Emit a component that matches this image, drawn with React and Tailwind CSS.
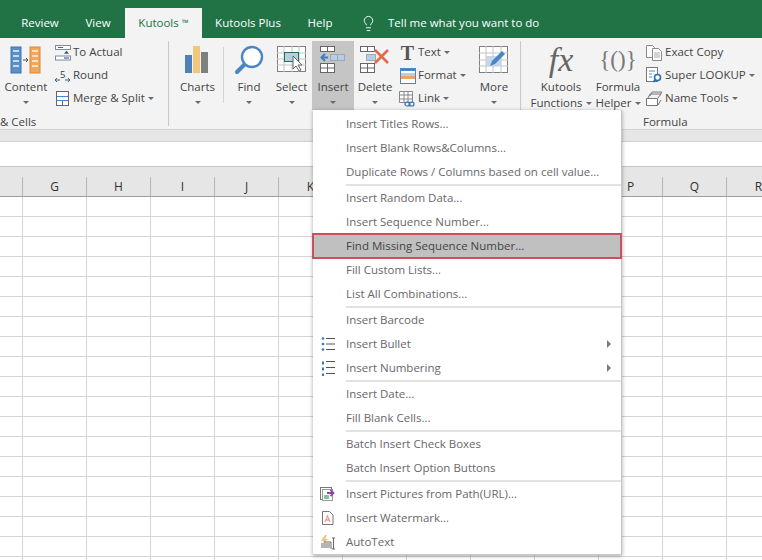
import { Lightbulb } from "lucide-react";

// L a O quedan tapadas por el menu, no llevan letra
const columns = ["", "G", "H", "I", "J", "K", "", "", "", "", "P", "Q", "R"];
const rows = Array.from({ length: 19 }, (_, i) => i);

//==================== Iconos del ribbon ====================//
const ContentIcon = () => (
  <svg width="32" height="28" viewBox="0 0 32 28">
    <rect x="1" y="1" width="10" height="26" fill="#5b8fc7" stroke="#3f74b0" />
    <rect x="20" y="1" width="10" height="26" fill="#f2a65a" stroke="#d98a3a" />
    {[4, 9, 14, 19].map((y) => (
      <g key={y} fill="#c6d9ee">
        <rect x="3" y={y} width="6" height="2" />
        <rect x="22" y={y} width="6" height="2" fill="#fde1c2" />
      </g>
    ))}
    <path d="M13 14h5M16 12l2 2-2 2" stroke="#555" fill="none" />
  </svg>
);

const ChartsIcon = () => (
  <svg width="26" height="27" viewBox="0 0 26 27">
    <rect x="0" y="9" width="7" height="18" fill="#4f81b8" />
    <rect x="8" y="0" width="7" height="27" fill="#f0c67a" />
    <rect x="16" y="6" width="7" height="21" fill="#7f7f7f" />
  </svg>
);

const FindIcon = () => (
  <svg width="30" height="30" viewBox="0 0 30 30">
    <circle cx="18" cy="12" r="10" fill="#fff" stroke="#4a86c5" strokeWidth="2.4" />
    <path d="M10 20L3 27" stroke="#4a86c5" strokeWidth="4" strokeLinecap="round" />
  </svg>
);

const SelectIcon = () => (
  <svg width="30" height="28" viewBox="0 0 30 28">
    <rect x="0.5" y="0.5" width="28" height="25" fill="#fff" stroke="#7f7f7f" />
    <path d="M0 7h29M0 13h29M0 19h29M7 0v26M15 0v26M22 0v26" stroke="#c4c4c4" />
    <rect x="7.5" y="6.5" width="14" height="9" fill="#b9cde4" stroke="#217346" />
    <path d="M16 10v13l3-3 3 5 2-1-3-5h4z" fill="#fff" stroke="#666" />
  </svg>
);

const InsertIcon = () => (
  <svg width="28" height="28" viewBox="0 0 28 28">
    <g fill="#fff" stroke="#666">
      <rect x="1.5" y="0.5" width="7" height="5" />
      <rect x="8.5" y="0.5" width="7" height="5" />
      <rect x="1.5" y="17.5" width="7" height="9" />
      <rect x="8.5" y="17.5" width="7" height="9" />
    </g>
    <path d="M1 22h15" stroke="#666" />
    <rect x="11.5" y="8.5" width="7" height="6" fill="#b9cde4" stroke="#9ab" />
    <rect x="18.5" y="8.5" width="7" height="6" fill="#b9cde4" stroke="#9ab" />
    <path d="M9 11.5H3M6 8l-3.500 3.500L6 15" stroke="#3f7fbf" strokeWidth="2" fill="none" />
  </svg>
);

const DeleteIcon = () => (
  <svg width="32" height="28" viewBox="0 0 32 28">
    <g fill="#fff" stroke="#666">
      <rect x="1.500" y="0.500" width="7" height="5" />
      <rect x="8.500" y="0.500" width="7" height="5" />
      <rect x="1.500" y="17.500" width="7" height="9" />
      <rect x="8.500" y="17.500" width="7" height="9" />
    </g>
    <path d="M1 22h15" stroke="#666" />
    <rect x="7.500" y="8.500" width="9" height="6" fill="#b9cde4" stroke="#9ab" />
    <path d="M16 4l13 13M29 4L16 17" stroke="#e2694a" strokeWidth="2.600" />
  </svg>
);

const MoreIcon = () => (
  <svg width="30" height="28" viewBox="0 0 30 28">
    <rect x="0.500" y="0.500" width="28" height="26" fill="#fff" stroke="#7f7f7f" />
    <path d="M0 7h29M0 14h29M0 20h29M7 0v27M14 0v27M22 0v27" stroke="#c4c4c4" />
    <rect x="7" y="10" width="15" height="10" fill="#c6d6e8" />
    <path d="M11 20l2-5 10-10 3 3-10 10z" fill="#4a86c5" />
  </svg>
);

const FxIcon = () => (
  <span className="font-['Liberation_Serif',serif] italic text-[34px] leading-[30px] text-[#666]">fx</span>
);

const BracesIcon = () => (
  <span className="font-['Liberation_Serif',serif] text-[23px] leading-[30px] text-[#777]">{"{()}"}</span>
);

const ToActualIcon = () => (
  <svg width="16" height="16" viewBox="0 0 16 16">
    <rect x="0.500" y="0.500" width="15" height="4" fill="#fff" stroke="#7a8aa5" />
    <rect x="3" y="2" width="5" height="1" fill="#c0392b" />
    <path d="M10 8l1.500-2 1.500 2zM9 8.500h5" fill="#445" stroke="#445" strokeWidth="0.500" />
    <rect x="0.500" y="11" width="15" height="4" fill="#fff" stroke="#7a8aa5" />
    <rect x="9" y="12.500" width="5" height="1" fill="#2a3f9e" />
  </svg>
);

const RoundIcon = () => (
  <svg width="17" height="16" viewBox="0 0 17 16">
    <text x="6" y="10" fontSize="9.500" fill="#333" fontFamily="Open Sans">5</text>
    <path d="M1 12h5M1 12l2-2M1 12l2 2M11 12h5M16 12l-2-2M16 12l-2 2" stroke="#3a5f85" fill="none" />
  </svg>
);

const MergeIcon = () => (
  <svg width="14" height="16" viewBox="0 0 14 16">
    <rect x="0.500" y="0.500" width="12" height="14" fill="#fff" stroke="#666" />
    <path d="M1 5.500h11" stroke="#4a86c5" />
    <path d="M1 9.500h11" stroke="#4a86c5" />
    <path d="M6.500 10v5" stroke="#666" />
  </svg>
);

const TextIcon = () => (
  <span className="font-['Liberation_Serif',serif] font-bold text-[20px] leading-4 text-[#555]">T</span>
);

const FormatIcon = () => (
  <svg width="16" height="16" viewBox="0 0 16 16">
    <rect x="0.500" y="0.500" width="15" height="15" fill="#fff" stroke="#4a86c5" />
    <rect x="1" y="5" width="14" height="3" fill="#b9cde4" />
    <rect x="1" y="8" width="14" height="3" fill="#f2a65a" />
    <rect x="1" y="1" width="14" height="2" fill="#4a86c5" />
  </svg>
);

const LinkIcon = () => (
  <svg width="17" height="16" viewBox="0 0 17 16">
    <path d="M.5.500h13v11H.5zM5 1v11M9 1v11M1 4h13M1 8h13" stroke="#888" fill="#fff" />
    <rect x="6" y="11" width="5" height="4" rx="2" fill="none" stroke="#2f6fb5" strokeWidth="1.200" />
    <rect x="10" y="11" width="5" height="4" rx="2" fill="none" stroke="#2f6fb5" strokeWidth="1.200" />
  </svg>
);

const CopyIcon = () => (
  <svg width="17" height="16" viewBox="0 0 17 16">
    <path d="M.5.500h6l2 2v10h-8z" fill="#fff" stroke="#8a8a8a" />
    <path d="M6.500 3.500h6l3 3v9h-9z" fill="#fff" stroke="#8a8a8a" />
    <path d="M8 8h6M8 10h6M8 12h6" stroke="#aaa" />
  </svg>
);

const LookupIcon = () => (
  <svg width="17" height="17" viewBox="0 0 17 17">
    <rect x="0.500" y="0.500" width="11" height="14" fill="#fff" stroke="#777" />
    <path d="M3 4h6M3 7h3M3 10h3" stroke="#5b8fc7" />
    <circle cx="11.500" cy="10.500" r="3" fill="#fff" stroke="#1f6fc0" strokeWidth="1.600" />
    <path d="M9.500 12.500L7.500 15" stroke="#1f6fc0" strokeWidth="2" />
  </svg>
);

const NameIcon = () => (
  <svg width="17" height="16" viewBox="0 0 17 16">
    <path d="M.5 7.500h11v7H.5z" fill="#fff" stroke="#777" />
    <path d="M2 7l2-4h11l-3 4M4 5l2-4h10l-2 3" fill="none" stroke="#777" />
    <path d="M12 14l3-5" stroke="#777" />
  </svg>
);

//==================== Iconos del menu ====================//
const BulletIcon = () => (
  <svg width="15" height="15" viewBox="0 0 15 15">
    {[1.500, 7, 12.500].map((y) => (
      <g key={y}>
        <circle cx="2" cy={y} r="1.300" fill="#3f74b0" />
        <path d={`M5 ${y}h9`} stroke="#555" />
      </g>
    ))}
  </svg>
);

const NumberingIcon = () => (
  <svg width="15" height="16" viewBox="0 0 15 16">
    {[1.500, 7.500, 13.500].map((y) => (
      <g key={y}>
        <rect x="1" y={y} width="2" height="3" fill="#3f74b0" />
        <path d={`M5 ${y}h9`} stroke="#555" />
      </g>
    ))}
  </svg>
);

const PicturesIcon = () => (
  <svg width="16" height="14" viewBox="0 0 16 14">
    <rect x="0.500" y="0.500" width="11" height="12" fill="#fff" stroke="#777" />
    <rect x="2.500" y="2.500" width="10" height="11" fill="#fff" stroke="#999" />
    <rect x="4" y="8" width="5" height="4" fill="#7fc2a0" />
    <path d="M7 6h6M10.500 3l3 3-3 3" stroke="#8e44ad" strokeWidth="1.800" fill="none" />
  </svg>
);

const WatermarkIcon = () => (
  <svg width="12" height="14" viewBox="0 0 12 14">
    <path d="M.5.500h7l3.500 3.500v9.500H.5z" fill="#fff" stroke="#777" />
    <path d="M3 11l2.500-6 2.500 6M4 9h3" stroke="#eda090" fill="none" strokeWidth="1.300" />
  </svg>
);

const AutoTextIcon = () => (
  <svg width="16" height="15" viewBox="0 0 16 15">
    <path d="M5 0L1 6h3L2 10l6-6H5l2-4z" fill="#efc27b" />
    <rect x="1" y="8" width="9" height="5" fill="#b5b5b5" />
    <path d="M4 7h7v7M12 3h3M12 14h3M13.500 3v11" stroke="#666" fill="none" />
  </svg>
);

//==================== Datos del menu ====================//
const menu = [
  [{ label: "Insert Titles Rows..." }, { label: "Insert Blank Rows&Columns..." }, { label: "Duplicate Rows / Columns based on cell value..." }],
  [{ label: "Insert Random Data..." }, { label: "Insert Sequence Number..." }, { label: "Find Missing Sequence Number...", active: true }, { label: "Fill Custom Lists..." }, { label: "List All Combinations..." }],
  [{ label: "Insert Barcode" }, { label: "Insert Bullet", icon: <BulletIcon />, sub: true }, { label: "Insert Numbering", icon: <NumberingIcon />, sub: true }],
  [{ label: "Insert Date..." }, { label: "Fill Blank Cells..." }],
  [{ label: "Batch Insert Check Boxes" }, { label: "Batch Insert Option Buttons" }],
  [{ label: "Insert Pictures from Path(URL)...", icon: <PicturesIcon /> }, { label: "Insert Watermark...", icon: <WatermarkIcon /> }, { label: "AutoText", icon: <AutoTextIcon /> }],
];

const Caret = () => (
  <span className="inline-block w-0 h-0 border-x-[3px] border-t-[3px] border-x-transparent border-t-[#6a6a6a]" />
);

const Tab = ({ width, active, children }) => (
  <div
    className={`${width} h-[30px] flex items-center justify-center ${
      active ? "bg-[#f3f3f3] text-[#217346]" : "text-white"
    }`}
  >
    {children}
  </div>
);

const BigButton = ({ width, icon, label, second, active }) => (
  <div className={`${width} h-[69px] shrink-0 flex flex-col items-center ${active ? "bg-[#c5c5c5]" : ""}`}>
    <div className="h-[38px] shrink-0 flex items-center justify-center pb-[1px]">{icon}</div>
    <div className="h-4 shrink-0 leading-4 whitespace-nowrap">{label}</div>
    {second ? (
      <div className="h-4 shrink-0 leading-4 whitespace-nowrap flex items-center gap-[3px]">
        {second}
        <Caret />
      </div>
    ) : (
      <div className="h-[15px] shrink-0 flex items-center">
        <Caret />
      </div>
    )}
  </div>
);

const SmallButton = ({ icon, label, caret }) => (
  <div className="h-[23px] flex items-center whitespace-nowrap">
    <span className="w-[19px] flex justify-center shrink-0">{icon}</span>
    <span className="ml-[1px] -mt-[1px]">{label}</span>
    {caret && (
      <span className="ml-[3px] flex">
        <Caret />
      </span>
    )}
  </div>
);

const MenuRow = ({ label, icon, sub, active }) => (
  <div
    className={`h-6 flex items-center ${
      active
        ? "bg-[#c0c0c0] text-[#444] outline-2 -outline-offset-1 outline-[#c8505f]"
        : "text-[#6a666c]"
    }`}
  >
    <span className="w-[33px] shrink-0 flex justify-center pr-[3px]">{icon}</span>
    <span>{label}</span>
    {sub && (
      <span className="ml-auto mr-[10px] w-0 h-0 border-y-[4px] border-l-[4px] border-y-transparent border-l-[#7a7a7a]" />
    )}
  </div>
);

export default function App() {
  return (
    <div className="relative w-[762px] h-[560px] overflow-hidden bg-white font-['Open_Sans',sans-serif] text-[11.500px] text-[#444]">
      {/* //========= Pestañas ============ */}
      <div className="h-[38px] bg-[#217346] flex items-end pl-[9px]">
        <Tab width="w-[62px]">Review</Tab>
        <Tab width="w-[54px]">View</Tab>
        <Tab width="w-[77px]" active>
          <span>Kutools</span>
          <span className="ml-[3px] text-[9px] leading-none -mt-[2px]">™</span>
        </Tab>
        <Tab width="w-[92px]">Kutools Plus</Tab>
        <Tab width="w-[52px]">Help</Tab>
        <div className="h-[30px] flex items-center text-white ml-[14px] gap-[11px]">
          <Lightbulb size={17} strokeWidth={1.300} />
          <span>Tell me what you want to do</span>
        </div>
      </div>

      {/* //========= Ribbon ============ */}
      <div className="h-[92px] bg-[#f3f3f3] flex pt-[3px] border-b border-[#d4d4d4]">
        <div className="w-[169px] shrink-0 h-[85px] border-r border-[#c8c8c8] flex flex-col">
          <div className="flex h-[69px]">
            <BigButton width="w-[52px]" icon={<ContentIcon />} label="Content" />
            <div className="ml-[1px]">
              <SmallButton icon={<ToActualIcon />} label="To Actual" />
              <SmallButton icon={<RoundIcon />} label="Round" />
              <SmallButton icon={<MergeIcon />} label="Merge & Split" caret />
            </div>
          </div>
          <div className="mt-[4px] leading-4">&amp; Cells</div>
        </div>

        <div className="w-[352px] shrink-0 h-[85px] border-r border-[#c8c8c8] flex pl-[3px]">
          <BigButton width="w-[51px]" icon={<ChartsIcon />} label="Charts" />
          <div className="w-px h-[56px] mt-[6px] bg-[#d4d4d4] shrink-0" />
          <BigButton width="w-[50px]" icon={<FindIcon />} label="Find" />
          <BigButton width="w-[38px] pr-[3px]" icon={<SelectIcon />} label="Select" />
          <BigButton width="w-[42px]" icon={<InsertIcon />} label="Insert" active />
          <BigButton width="w-[42px]" icon={<DeleteIcon />} label="Delete" />
          <div className="w-[74px] shrink-0 ml-[2px]">
            <SmallButton icon={<TextIcon />} label="Text" caret />
            <SmallButton icon={<FormatIcon />} label="Format" caret />
            <SmallButton icon={<LinkIcon />} label="Link" caret />
          </div>
          <BigButton width="w-[44px]" icon={<MoreIcon />} label="More" />
        </div>

        <div className="flex-1 h-[85px] flex flex-col pl-[9px]">
          <div className="flex h-[69px]">
            <BigButton width="w-[62px]" icon={<FxIcon />} label="Kutools" second="Functions" />
            <BigButton width="w-[52px]" icon={<BracesIcon />} label="Formula" second="Helper" />
            <div className="ml-[1px]">
              <SmallButton icon={<CopyIcon />} label="Exact Copy" />
              <SmallButton icon={<LookupIcon />} label="Super LOOKUP" caret />
              <SmallButton icon={<NameIcon />} label="Name Tools" caret />
            </div>
          </div>
          <div className="mt-[4px] leading-4 pl-[113px]">Formula</div>
        </div>
      </div>

      {/* //========= Barra de formulas ============ */}
      <div className="h-[12px] bg-[#e6e6e6] border-b border-[#cfcfcf]" />
      <div className="h-[25px] bg-white border-b border-[#c6c6c6]" />

      {/* //========= Encabezado de columnas ============ */}
      <div className="h-[30px] bg-[#e6e6e6] border-b border-[#a0a0a0] flex items-end">
        {columns.map((col, i) => (
          <div
            key={i}
            className={`${i === 0 ? "w-[23px]" : "w-16"} h-[19px] pt-[1px] shrink-0 border-r border-[#b4b4b4] flex items-center justify-center text-[12px] text-[#333]`}
          >
            {col}
          </div>
        ))}
      </div>

      {/* //========= Celdas ============ */}
      {rows.map((row) => (
        <div key={row} className="h-5 flex">
          {columns.map((col, i) => (
            <div
              key={i}
              className={`${i === 0 ? "w-[23px]" : "w-16"} shrink-0 border-r border-b border-[#d4d4d4]`}
            />
          ))}
        </div>
      ))}

      {/* //========= Menu desplegable Insert ============ */}
      <div className="absolute left-[313px] top-[110px] w-[309px] h-[445px] bg-white pt-[2px] border-r border-b border-[#c6c6c6] shadow-[0_1px_4px_rgba(0,0,0,0.35)]">
        {menu.map((group, g) => (
          <div key={g}>
            {g > 0 && <div className="ml-[33px] h-[2px] bg-[#e2e2e2]" />}
            {group.map((item) => (
              <MenuRow key={item.label} {...item} />
            ))}
          </div>
        ))}
      </div>
    </div>
  );
}
